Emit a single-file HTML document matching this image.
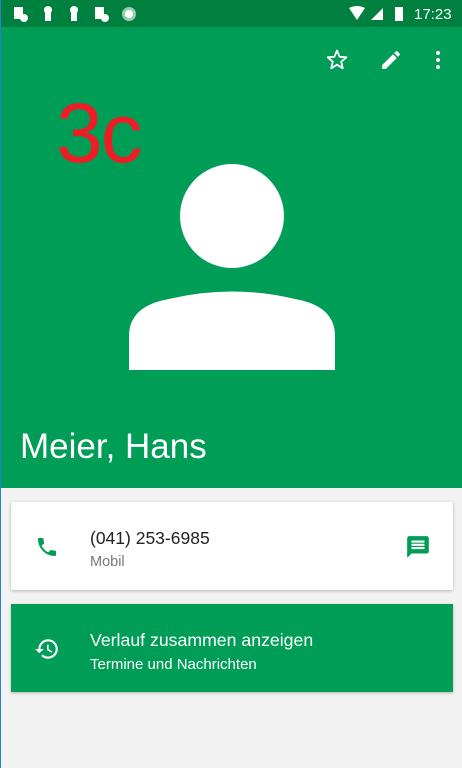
<!DOCTYPE html><html><head><style>
body{margin:0;width:462px;height:768px;background:#f2f2f2;font-family:"Liberation Sans",sans-serif;position:relative;overflow:hidden;border-left:1px solid #2a7fd4;box-sizing:border-box}
.a{position:absolute}
</style></head><body>
<div class="a" style="left:0;top:0;width:462px;height:27px;background:#00803f"></div>
<div class="a" style="left:0;top:27px;width:462px;height:461px;background:#009d57"></div>
<svg class="a" style="left:12px;top:5px" width="130" height="18"><rect x="1" y="2" width="9" height="12" fill="#fff"/><circle cx="11" cy="13" r="4" fill="#fff"/><circle cx="35" cy="5" r="4" fill="#fff"/><rect x="32" y="6" width="6" height="10" fill="#fff"/><circle cx="61" cy="5" r="4" fill="#fff"/><rect x="58" y="6" width="6" height="10" fill="#fff"/><rect x="82" y="2" width="9" height="12" fill="#fff"/><circle cx="92" cy="13" r="4" fill="#fff"/><circle cx="116" cy="9" r="7" fill="#fff" opacity=".6"/><circle cx="116" cy="9" r="4" fill="#fff"/></svg>
<svg class="a" style="left:346px;top:6px" width="60" height="16"><path d="M2 2 Q10 -2 18 2 L10 14Z" fill="#fff"/><path d="M36 2 L36 14 L24 14Z" fill="#fff"/><rect x="48" y="1" width="8" height="14" fill="#fff"/></svg>
<div class="a" style="left:413px;top:6px;color:#fff;font-size:15px">17:23</div>
<svg class="a" style="left:324px;top:48px" width="24" height="24" viewBox="0 0 24 24"><path d="M12 2.5l2.6 6.3 6.8.5-5.2 4.4 1.6 6.6L12 16.7l-5.8 3.6 1.6-6.6-5.2-4.4 6.8-.5z" fill="none" stroke="#fff" stroke-width="1.8" stroke-linejoin="round"/></svg>
<svg class="a" style="left:378px;top:48px" width="24" height="24" viewBox="0 0 24 24"><path d="M3 17.25V21h3.75L17.81 9.94l-3.75-3.75L3 17.25zM20.71 7.04a1 1 0 000-1.41l-2.34-2.34a1 1 0 00-1.41 0l-1.830 1.83 3.75 3.75 1.83-1.83z" fill="#fff"/></svg>
<svg class="a" style="left:425px;top:48px" width="24" height="24" viewBox="0 0 24 24"><circle cx="12" cy="5" r="2" fill="#fff"/><circle cx="12" cy="12" r="2" fill="#fff"/><circle cx="12" cy="19" r="2" fill="#fff"/></svg>
<div class="a" style="left:55px;top:93px;color:#ee1c25;font-size:84px;line-height:80px;font-family:'Liberation Sans',sans-serif;letter-spacing:-2px">3c</div>
<svg class="a" style="left:128px;top:164px" width="206" height="207"><circle cx="103" cy="52" r="52" fill="#fff"/><path d="M0 206 L0 172 Q0 142 40 135 Q103 120 166 135 Q206 142 206 172 L206 206Z" fill="#fff"/></svg>
<div class="a" style="left:19px;top:427px;color:#fff;font-size:35px">Meier, Hans</div>
<div class="a" style="left:10px;top:502px;width:442px;height:88px;background:#fff;border-radius:2px;box-shadow:0 1px 3px rgba(0,0,0,.25)"></div>
<svg class="a" style="left:34px;top:535px" width="24" height="24" viewBox="0 0 24 24"><path d="M6.6 10.8c1.4 2.8 3.8 5.1 6.6 6.6l2.2-2.2c.3-.3.7-.4 1-.2 1.1.4 2.300.6 3.6.6.6 0 1 .4 1 1V20c0 .6-.4 1-1 1C10.6 21 3 13.4 3 4c0-.6.4-1 1-1h3.5c.6 0 1 .4 1 1 0 1.3.2 2.5.6 3.6.1.3 0 .7-.2 1z" fill="#009d57"/></svg>
<div class="a" style="left:89px;top:528px;color:#222;font-size:17.5px">(041) 253-6985</div>
<div class="a" style="left:89px;top:554px;color:#777;font-size:14.5px">Mobil</div>
<svg class="a" style="left:404px;top:534px" width="26" height="26" viewBox="0 0 24 24"><path d="M20 2H4c-1.1 0-2 .9-2 2v18l4-4h14c1.1 0 2-.9 2-2V4c0-1.1-.9-2-2-2zM18 14H6v-2h12v2zm0-3H6V9h12v2zm0-3H6V6h12v2z" fill="#009d57"/></svg>
<div class="a" style="left:10px;top:604px;width:442px;height:88px;background:#009d57;box-shadow:0 1px 3px rgba(0,0,0,.25)"></div>
<svg class="a" style="left:33px;top:636px" width="26" height="26" viewBox="0 0 24 24"><path d="M13 3a9 9 0 00-9 9H1l3.9 3.9L9 12H6a7 7 0 112.05 4.95l-1.42 1.42A9 9 0 1013 3zm-1 5v5l4.3 2.5.7-1.2-3.5-2.1V8z" fill="#fff"/></svg>
<div class="a" style="left:89px;top:630px;color:#fff;font-size:17.7px">Verlauf zusammen anzeigen</div>
<div class="a" style="left:89px;top:656px;color:#fff;font-size:15px">Termine und Nachrichten</div>
</body></html>
